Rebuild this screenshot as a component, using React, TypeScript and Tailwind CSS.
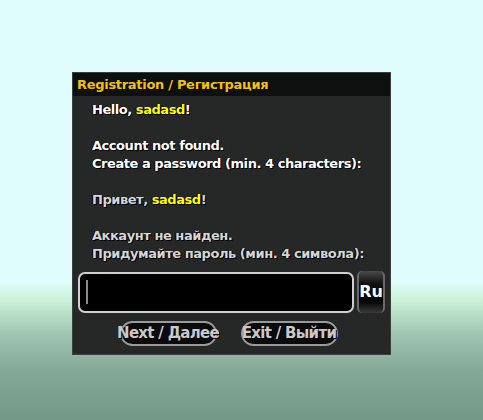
import React from "react";

const font = "font-['DejaVu_Sans','Liberation_Sans',sans-serif]";

function Line({ children, muted }: { children: React.ReactNode; muted?: boolean }) {
  return (
    <p
      className={`h-[18px] leading-[18px] text-[13px] font-bold tracking-[-0.45px] ${
        muted ? "text-[#d6d6d6]" : "text-white"
      } [text-shadow:1px_1px_0_#000,-1px_0_0_#000]`}
    >
      {children}
    </p>
  );
}

function Name() {
  return <span className="text-[#ffff00]">sadasd</span>;
}

function PillButton({ label }: { label: string }) {
  return (
    <button className="relative flex h-[25px] w-[97px] items-center justify-center rounded-full border-2 border-[#9a9a9a] bg-[#0b0b0b]">
      <span className="whitespace-nowrap text-[15px] font-bold tracking-[-0.7px] text-[#c9c9c9] [text-shadow:1px_1px_0_#000]">
        {label}
      </span>
    </button>
  );
}

export default function App() {
  return (
    <div
      className={`${font} h-[420px] w-[483px] overflow-hidden bg-[linear-gradient(to_bottom,#e0fdfd_0%,#e0fdfd_67%,#cdf3da_71%,#a2c8b5_79%,#84aa97_88%,#729886_100%)] pl-[72px] pt-[72px]`}
    >
      <div className="flex h-[283px] w-[319px] flex-col border border-[#3c3d3d] bg-[#262727]">
        {/* title bar */}
        <div className="flex h-[23px] items-center bg-[#0e0f0f] pl-[4px]">
          <span className="text-[13px] font-bold tracking-[-0.3px] text-[#f5c300] [text-shadow:1px_1px_0_#000]">
            Registration / Регистрация
          </span>
        </div>

        {/* message */}
        <div className="flex flex-col pl-[19px] pt-[5px]">
          <Line>
            Hello, <Name />!
          </Line>
          <Line>{"\u00a0"}</Line>
          <Line>Account not found.</Line>
          <Line>Create a password (min. 4 characters):</Line>
          <Line>{"\u00a0"}</Line>
          <Line muted>
            Привет, <Name />!
          </Line>
          <Line>{"\u00a0"}</Line>
          <Line muted>Аккаунт не найден.</Line>
          <Line muted>Придумайте пароль (мин. 4 символа):</Line>
        </div>

        {/* password input */}
        <div className="mt-[8px] flex items-center gap-[3px] pl-[5px]">
          <div className="flex h-[41px] w-[276px] items-center rounded-[7px] border-2 border-[#d0d0d0] bg-black pl-[6px]">
            <div className="h-[24px] w-[2px] bg-[#8a8a8a]" />
          </div>
          <button className="flex h-[42px] w-[28px] items-center justify-center rounded-[5px] border-x-2 border-[#6a6a6a] bg-[linear-gradient(to_bottom,#4a4a4a_0%,#111_30%,#000_70%,#3a3a3a_100%)]">
            <span className="text-[16px] font-bold text-white">Ru</span>
          </button>
        </div>

        {/* actions */}
        <div className="mt-[8px] flex justify-center gap-[24px] pr-[6px]">
          <PillButton label="Next / Далее" />
          <PillButton label="Exit / Выйти" />
        </div>
      </div>
    </div>
  );
}
